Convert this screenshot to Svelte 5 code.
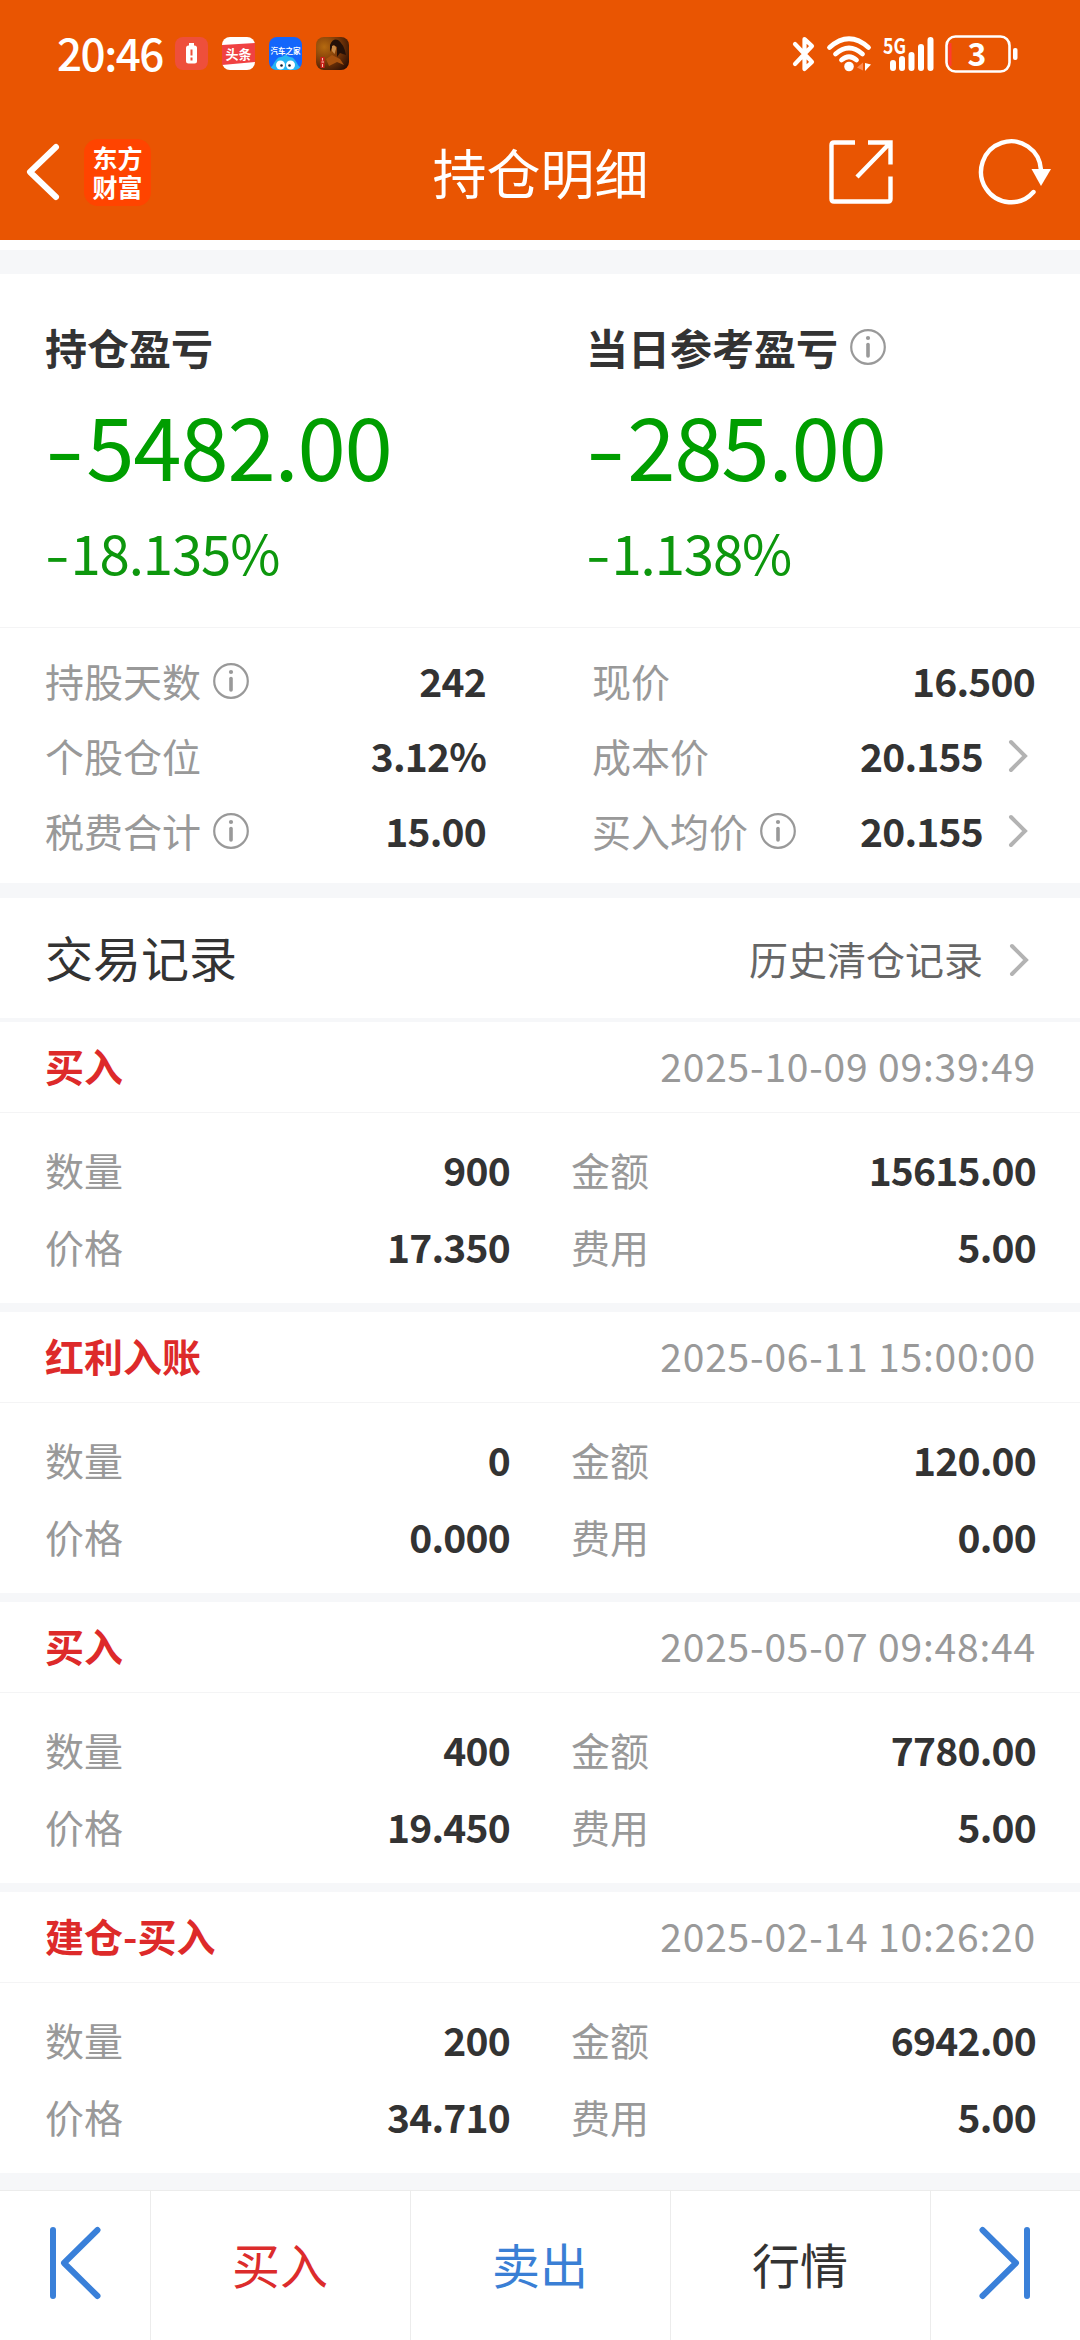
<script lang="ts">
	interface Metric {
		label: string;
		value: string;
		info?: boolean;
		link?: boolean;
	}

	interface TradeRecord {
		type: string;
		time: string;
		count: string;
		amount: string;
		price: string;
		fee: string;
	}

	const summary = [
		{ title: '持仓盈亏', amount: '5482.00', percent: '18.135%', info: false },
		{ title: '当日参考盈亏', amount: '285.00', percent: '1.138%', info: true }
	];

	const metrics: Metric[] = [
		{ label: '持股天数', value: '242', info: true },
		{ label: '现价', value: '16.500' },
		{ label: '个股仓位', value: '3.12%' },
		{ label: '成本价', value: '20.155', link: true },
		{ label: '税费合计', value: '15.00', info: true },
		{ label: '买入均价', value: '20.155', info: true, link: true }
	];

	const records: TradeRecord[] = [
		{ type: '买入', time: '2025-10-09 09:39:49', count: '900', amount: '15615.00', price: '17.350', fee: '5.00' },
		{ type: '红利入账', time: '2025-06-11 15:00:00', count: '0', amount: '120.00', price: '0.000', fee: '0.00' },
		{ type: '买入', time: '2025-05-07 09:48:44', count: '400', amount: '7780.00', price: '19.450', fee: '5.00' },
		{ type: '建仓-买入', time: '2025-02-14 10:26:20', count: '200', amount: '6942.00', price: '34.710', fee: '5.00' }
	];
</script>

{#snippet infoIcon()}
	<svg class="info" viewBox="0 0 36 36">
		<circle cx="18" cy="18" r="16.8" fill="none" stroke="#999" stroke-width="2.2" />
		<circle cx="18" cy="9" r="2.1" fill="#999" />
		<path d="M18 15.5V27" stroke="#999" stroke-width="3.6" stroke-linecap="round" />
	</svg>
{/snippet}

{#snippet chevron()}
	<svg class="chevron" viewBox="0 0 20 34">
		<path d="M3 3L17 17L3 31" fill="none" stroke="#b3b3b3" stroke-width="4" stroke-linecap="round" />
	</svg>
{/snippet}

<div class="page">
	<header>
		<div class="status-bar">
			<span class="time">20:46</span>
			<div class="notifications">
				<svg viewBox="0 0 33 33">
					<rect width="33" height="33" rx="8" fill="#ee4f3b" />
					<rect x="14" y="6" width="5" height="3" fill="#fff" />
					<rect x="11" y="8.500" width="11" height="18" rx="2.500" fill="#fff" />
					<path d="M16.500 12.500v6M16.500 20.500v3" stroke="#ee4f3b" stroke-width="2" />
				</svg>
				<svg viewBox="0 0 33 33">
					<rect width="33" height="33" rx="8" fill="#fff" />
					<path d="M0 8L33 6V25L0 28Z" fill="#f04142" />
					<text x="16.500" y="22" font-size="13" font-weight="700" fill="#fff" text-anchor="middle">头条</text>
				</svg>
				<svg viewBox="0 0 33 33">
					<rect width="33" height="33" rx="8" fill="#1466fb" />
					<path d="M1.500 30C4 30 5 24 9.500 20.500Q15 19.500 16.500 17Q18 19.500 23.500 20.500C28 24 29 30 31.500 30Q29 33 25 33H8Q4 33 1.500 30Z" fill="#27b5f3" />
					<circle cx="11.500" cy="28" r="4.500" fill="#fff" />
					<circle cx="21.500" cy="28" r="4.500" fill="#fff" />
					<circle cx="12.500" cy="28.500" r="1.300" fill="#123" />
					<circle cx="20.500" cy="28.500" r="1.300" fill="#123" />
					<text x="16.500" y="17" font-size="7.500" font-weight="700" fill="#fff" text-anchor="middle">汽车之家</text>
				</svg>
				<svg viewBox="0 0 33 33">
					<defs>
						<radialGradient id="game" cx="0.25" cy="0.3" r="0.9">
							<stop offset="0" stop-color="#b56a10" />
							<stop offset="0.5" stop-color="#7e3a08" />
							<stop offset="1" stop-color="#2c0f05" />
						</radialGradient>
					</defs>
					<rect width="33" height="33" rx="8" fill="url(#game)" />
					<path d="M14 8Q17 1 22 3Q28 7 30 18L24 16L21 20L21 10L17 8L14 15Z" fill="#241008" />
					<path d="M16 9Q20 7 20 12L18.500 17L16 14Z" fill="#c88a48" />
					<path d="M10 22L16 18L24 22L28 28L21 25L13 29Z" fill="#a8520f" />
					<rect x="4.500" y="20" width="4" height="11" fill="#cf1f1c" />
					<path d="M6.500 21v2.500M5.500 25h2.500M6.500 27v3" stroke="#f4c9b0" stroke-width="1" />
				</svg>
			</div>
			<div class="indicators">
				<svg class="bluetooth" viewBox="0 0 22 36">
					<path d="M2 8L19 26L11.500 33V3L19 10L2 28" fill="none" stroke="#fff" stroke-width="4.200" stroke-linecap="round" stroke-linejoin="round" />
				</svg>
				<svg class="wifi" viewBox="0 0 44 36">
					<g fill="none" stroke="#fff" stroke-width="4.800" stroke-linecap="round">
						<path d="M2.500 11.500Q22 -6 41.500 11.500" />
						<path d="M8.500 18Q22 6 35.500 18" />
						<path d="M14.500 24Q22 17.500 29.500 24" />
					</g>
					<circle cx="22" cy="30.500" r="4.800" fill="#fff" />
					<path d="M30 31.500L36 26.500V34.500Z" fill="#ff8a50" />
					<path d="M38 27V35L44 28.500Z" fill="#fff" />
				</svg>
				<svg class="signal" viewBox="0 0 51 36">
					<text x="0" y="17.500" font-size="21.500" font-weight="700" fill="#fff" textLength="23" lengthAdjust="spacingAndGlyphs">5G</text>
					<path d="M10 27V32M19 23V32M28.500 19V32M38 11V32M47.500 4V32" stroke="#fff" stroke-width="6" stroke-linecap="round" />
				</svg>
				<svg class="battery" viewBox="0 0 74 38">
					<path d="M5 8V31" stroke="#ff3b30" stroke-width="3" />
					<rect x="1.500" y="1.500" width="63" height="35" rx="9" fill="none" stroke="#fff" stroke-width="2.600" />
					<rect x="68" y="13" width="4.500" height="12" rx="2" fill="#fff" />
					<text x="32" y="30.500" font-size="32" font-weight="700" fill="#fff" text-anchor="middle">3</text>
				</svg>
			</div>
		</div>

		<div class="nav-bar">
			<svg class="back" viewBox="0 0 32 56">
				<path d="M29 3L3 28L29 53" fill="none" stroke="#fff" stroke-width="6" stroke-linecap="round" stroke-linejoin="round" />
			</svg>
			<div class="logo">
				<span>东方</span>
				<span>财富</span>
			</div>
			<h1>持仓明细</h1>
			<svg class="share" viewBox="0 0 64 64">
				<path d="M26 2.500H5Q2.500 2.500 2.500 5V59Q2.500 61.500 5 61.500H59Q61.500 61.500 61.500 59V36.500M39 2.500H61.500V24.500M61 3L28 37" fill="none" stroke="#fff" stroke-width="4.400" />
			</svg>
			<svg class="refresh" viewBox="0 0 72 66">
				<path d="M61 31A30 30.500 0 1 0 53.500 53" fill="none" stroke="#fff" stroke-width="4.400" stroke-linecap="round" />
				<path d="M51.500 30H71L61 47Z" fill="#fff" />
			</svg>
		</div>
	</header>

	<div class="gap-top"></div>

	<section class="summary">
		{#each summary as item}
			<div class="summary-item">
				<h2>
					{item.title}
					{#if item.info}{@render infoIcon()}{/if}
				</h2>
				<div class="amount"><span class="minus">-</span>{item.amount}</div>
				<div class="percent"><span class="minus">-</span>{item.percent}</div>
			</div>
		{/each}
	</section>

	<section class="metrics">
		{#each metrics as metric}
			<div class="metric">
				<span class="label">{metric.label}</span>
				{#if metric.info}{@render infoIcon()}{/if}
				<span class="value">{metric.value}</span>
				{#if metric.link}{@render chevron()}{/if}
			</div>
		{/each}
	</section>

	<section class="history">
		<h3>交易记录</h3>
		<span class="history-link">历史清仓记录</span>
		{@render chevron()}
	</section>

	{#each records as record}
		<article class="record">
			<div class="record-head">
				<span class="type">{record.type}</span>
				<time>{record.time}</time>
			</div>
			<div class="record-body">
				<span class="label">数量</span>
				<span class="value">{record.count}</span>
				<span class="label second">金额</span>
				<span class="value">{record.amount}</span>
				<span class="label">价格</span>
				<span class="value">{record.price}</span>
				<span class="label second">费用</span>
				<span class="value">{record.fee}</span>
			</div>
		</article>
	{/each}

	<footer>
		<button class="step">
			<svg viewBox="0 0 50 72">
				<path d="M3 3V69M47.500 3L14 36L47.500 69" />
			</svg>
		</button>
		<button class="buy">买入</button>
		<button class="sell">卖出</button>
		<button>行情</button>
		<button class="step">
			<svg viewBox="0 0 50 72">
				<path d="M47 3V69M2.500 3L36 36L2.500 69" />
			</svg>
		</button>
	</footer>
</div>

<style>
	:global(body) {
		margin: 0;
		background: #f6f7f9;
	}

	.page {
		width: 1080px;
		height: 2340px;
		display: flex;
		flex-direction: column;
		overflow: hidden;
		background: #f6f7f9;
		color: #333;
		font-family: 'Noto Sans CJK SC', sans-serif;
		font-size: 39px;
		line-height: 1;
	}

	svg {
		display: block;
		flex: none;
		overflow: visible;
	}

	h1,
	h2,
	h3 {
		margin: 0;
	}

	header {
		height: 240px;
		flex: none;
		background: #e95502;
		color: #fff;
	}

	.status-bar {
		display: flex;
		align-items: center;
		height: 107px;
		padding: 0 61px 0 57px;
	}

	.time {
		width: 118px;
		padding-bottom: 3px;
		font-size: 44px;
		font-weight: 500;
		letter-spacing: -1.5px;
	}

	.notifications {
		display: flex;
		gap: 14px;
	}

	.notifications svg {
		width: 33px;
		height: 33px;
	}

	.indicators {
		display: flex;
		align-items: center;
		margin-left: auto;
	}

	.bluetooth {
		width: 22px;
		height: 36px;
		margin-right: 12px;
	}

	.wifi {
		width: 44px;
		height: 36px;
		margin-right: 12px;
	}

	.signal {
		width: 51px;
		height: 36px;
		margin-right: 11px;
	}

	.battery {
		width: 74px;
		height: 38px;
	}

	.nav-bar {
		display: grid;
		grid-template-columns: 32px 67px 1fr 64px 72px;
		align-items: center;
		height: 130px;
		padding: 0 28px 0 27px;
	}

	.back {
		width: 32px;
		height: 56px;
	}

	.logo {
		display: flex;
		flex-direction: column;
		width: 67px;
		height: 67px;
		margin-left: 25px;
		box-sizing: border-box;
		padding-top: 4px;
		border-radius: 14px;
		background: #ff4400;
		font-size: 25px;
		font-weight: 700;
		line-height: 29px;
		text-align: center;
	}

	h1 {
		padding: 0 0 1px 39px;
		font-size: 54px;
		font-weight: 400;
		text-align: center;
	}

	.share {
		width: 64px;
		height: 64px;
		margin-left: -87px;
	}

	.refresh {
		width: 72px;
		height: 66px;
	}

	.gap-top {
		height: 24px;
		flex: none;
		border-top: 10px solid #fff;
	}

	.summary {
		display: grid;
		grid-template-columns: 541px 1fr;
		height: 353px;
		flex: none;
		padding-left: 45px;
		border-bottom: 1px solid #f4f4f5;
		background: #fff;
	}

	h2 {
		display: flex;
		align-items: center;
		gap: 12px;
		margin-top: 52px;
		font-size: 42px;
		font-weight: 700;
		line-height: 42px;
	}

	.info {
		width: 36px;
		height: 36px;
	}

	.amount {
		margin-top: 30px;
		color: #009e00;
		font-size: 87px;
		line-height: 90px;
		letter-spacing: -1.2px;
	}

	.minus {
		display: inline-block;
		transform: scaleX(1.3);
		transform-origin: left;
		margin-right: 0.14em;
	}

	.percent {
		margin-top: 36px;
		color: #0d970d;
		font-size: 54.5px;
		line-height: 56px;
		letter-spacing: -1.1px;
	}

	.metrics {
		display: grid;
		grid-template-columns: 440px 442px;
		grid-auto-rows: 75px;
		column-gap: 107px;
		height: 255px;
		flex: none;
		box-sizing: border-box;
		padding: 16px 45px 0;
		background: #fff;
	}

	.metric {
		display: flex;
		align-items: center;
	}

	.label {
		padding-bottom: 3px;
		color: #999;
	}

	.metric .info {
		margin-left: 12px;
		margin-bottom: 1px;
	}

	.value {
		margin-left: auto;
		margin-right: -1px;
		padding-bottom: 3px;
		font-weight: 700;
		letter-spacing: -0.8px;
		text-align: right;
	}

	.chevron {
		width: 20px;
		height: 34px;
		margin: 0 6px 1px 26px;
	}

	.history {
		display: flex;
		align-items: center;
		height: 120px;
		flex: none;
		margin: 15px 0 4px;
		padding: 0 45px;
		background: #fff;
	}

	.history .chevron {
		margin-top: 4px;
		margin-bottom: 0;
	}

	h3 {
		padding-bottom: 5px;
		font-size: 48px;
		font-weight: 400;
	}

	.history-link {
		margin-left: auto;
		color: #666;
	}

	.record {
		height: 281px;
		flex: none;
		margin-bottom: 9px;
		background: #fff;
	}

	.record-head {
		display: flex;
		align-items: center;
		justify-content: space-between;
		height: 90px;
		padding: 0 44px 0 45px;
		border-bottom: 1px solid #f4f4f5;
	}

	.type {
		padding-bottom: 3px;
		color: #dd2a2a;
		font-weight: 700;
	}

	time {
		padding-bottom: 3px;
		color: #999;
		letter-spacing: 0.8px;
	}

	.record-body {
		display: grid;
		grid-template-columns: 100px 364px 162px 1fr;
		grid-auto-rows: 77px;
		align-items: center;
		padding: 19px 45px 0;
	}

	.second {
		padding-left: 62px;
	}

	footer {
		display: grid;
		grid-template-columns: 151px 260px 260px 260px 1fr;
		height: 149px;
		flex: none;
		margin-top: 8px;
		border-top: 1px solid #ececec;
		background: #fff;
	}

	button {
		display: flex;
		align-items: center;
		justify-content: center;
		padding: 0 1px 5px 0;
		border: none;
		border-right: 1px solid #ececec;
		background: none;
		color: #333;
		font-family: inherit;
		font-size: 48px;
	}

	button:last-child {
		border-right: none;
	}

	.buy {
		color: #dc2c2c;
	}

	.sell {
		color: #3a7fd5;
	}

	.step svg {
		width: 50px;
		height: 72px;
	}

	.step path {
		fill: none;
		stroke: #3a80d9;
		stroke-width: 6;
		stroke-linecap: round;
		stroke-linejoin: round;
	}
</style>
